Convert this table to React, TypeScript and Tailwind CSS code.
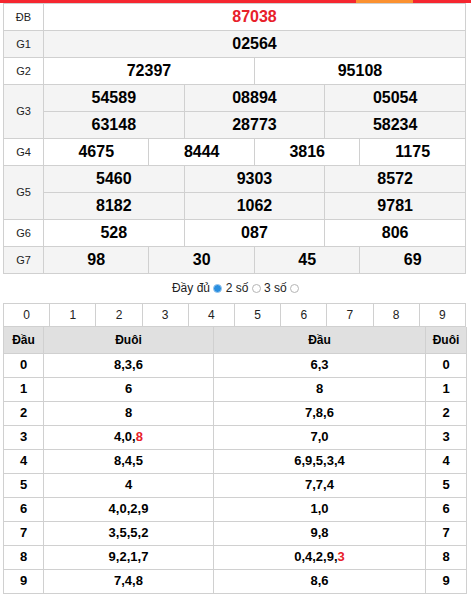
import React from "react";

type Prize = { label: string; rows: string[][]; red?: boolean };

const PRIZES: Prize[] = [
    { label: "ĐB", rows: [["87038"]], red: true },
    { label: "G1", rows: [["02564"]] },
    { label: "G2", rows: [["72397", "95108"]] },
    { label: "G3", rows: [["54589", "08894", "05054"], ["63148", "28773", "58234"]] },
    { label: "G4", rows: [["4675", "8444", "3816", "1175"]] },
    { label: "G5", rows: [["5460", "9303", "8572"], ["8182", "1062", "9781"]] },
    { label: "G6", rows: [["528", "087", "806"]] },
    { label: "G7", rows: [["98", "30", "45", "69"]] },
];

// đầu / đuôi; the last digit marked with * is the special prize (red)
const LOTO: { head: string; tail: string }[] = [
    { head: "8,3,6", tail: "6,3" },
    { head: "6", tail: "8" },
    { head: "8", tail: "7,8,6" },
    { head: "4,0,8*", tail: "7,0" },
    { head: "8,4,5", tail: "6,9,5,3,4" },
    { head: "4", tail: "7,7,4" },
    { head: "4,0,2,9", tail: "1,0" },
    { head: "3,5,5,2", tail: "9,8" },
    { head: "9,2,1,7", tail: "0,4,2,9,3*" },
    { head: "7,4,8", tail: "8,6" },
];

const border = "border border-[#d0d0d0]";

function Digits({ value }: { value: string }) {
    if (!value.endsWith("*")) return <>{value}</>;
    const v = value.slice(0, -1);
    const i = v.lastIndexOf(",");
    return (
        <>
            {v.slice(0, i + 1)}
            <span className="text-[#e8202a]">{v.slice(i + 1)}</span>
        </>
    );
}

function Radio({ checked }: { checked?: boolean }) {
    return checked ? (
        <span className="inline-block w-[9px] h-[9px] rounded-full bg-[#2a8fe0] border border-[#9cc8ee] align-[-1px]" />
    ) : (
        <span className="inline-block w-[9px] h-[9px] rounded-full bg-white border border-[#b5b5b5] align-[-1px]" />
    );
}

export default function App() {
    return (
        <div className="w-[471px] bg-white text-black" style={{ fontFamily: '"Liberation Sans", Arial, sans-serif' }}>
            <div className="flex h-[3px]">
                <div className="w-[356px] bg-[#f5262f]" />
                <div className="w-[57px] bg-[#fb9130]" />
                <div className="flex-1 bg-[#f5262f]" />
            </div>

            <div className="px-[3px]">
                <table className="w-[463px] table-fixed border-collapse">
                    <colgroup>
                        <col className="w-[40px]" />
                        {Array.from({ length: 12 }).map((_, i) => (
                            <col key={i} />
                        ))}
                    </colgroup>
                    <tbody>
                        {PRIZES.map((p, pi) =>
                            p.rows.map((row, ri) => (
                                <tr key={p.label + ri} className={pi % 2 === 1 ? "bg-[#f4f4f4]" : "bg-white"}>
                                    {ri === 0 && (
                                        <td
                                            rowSpan={p.rows.length}
                                            className={`${border} h-[27px] p-0 text-center text-[11px] text-[#222]`}
                                        >
                                            {p.label}
                                        </td>
                                    )}
                                    {row.map((n, ni) => (
                                        <td
                                            key={ni}
                                            colSpan={12 / row.length}
                                            className={`${border} h-[27px] p-0 text-center text-[16px] font-bold ${p.red ? "text-[#e8202a]" : ""}`}
                                        >
                                            {n}
                                        </td>
                                    ))}
                                </tr>
                            ))
                        )}
                    </tbody>
                </table>

                <div className="h-[29px] leading-[28px] text-center text-[12px] text-[#222]">
                    Đầy đủ <Radio checked /> 2 số <Radio /> 3 số <Radio />
                </div>

                <table className="w-[463px] table-fixed border-collapse">
                    <tbody>
                        <tr>
                            {Array.from({ length: 10 }).map((_, i) => (
                                <td key={i} className={`${border} h-[23px] p-0 text-center text-[12px] text-[#222]`}>
                                    {i}
                                </td>
                            ))}
                        </tr>
                    </tbody>
                </table>

                <table className="w-[463px] table-fixed border-collapse">
                    <colgroup>
                        <col className="w-[40px]" />
                        <col className="w-[170px]" />
                        <col className="w-[212px]" />
                        <col className="w-[41px]" />
                    </colgroup>
                    <thead>
                        <tr className="bg-[#e0e0e0]">
                            <th className={`${border} border-t-0 h-[26px] p-0 text-[12px] font-bold`}>Đầu</th>
                            <th className={`${border} border-t-0 p-0 text-[12px] font-bold`}>Đuôi</th>
                            <th className={`${border} border-t-0 p-0 text-[12px] font-bold`}>Đầu</th>
                            <th className={`${border} border-t-0 p-0 text-[12px] font-bold`}>Đuôi</th>
                        </tr>
                    </thead>
                    <tbody>
                        {LOTO.map((r, i) => (
                            <tr key={i}>
                                <td className={`${border} h-[24px] p-0 text-center text-[13px] font-bold`}>{i}</td>
                                <td className={`${border} p-0 text-center text-[13px] font-bold`}>
                                    <Digits value={r.head} />
                                </td>
                                <td className={`${border} p-0 text-center text-[13px] font-bold`}>
                                    <Digits value={r.tail} />
                                </td>
                                <td className={`${border} p-0 text-center text-[13px] font-bold`}>{i}</td>
                            </tr>
                        ))}
                    </tbody>
                </table>
            </div>
        </div>
    );
}
